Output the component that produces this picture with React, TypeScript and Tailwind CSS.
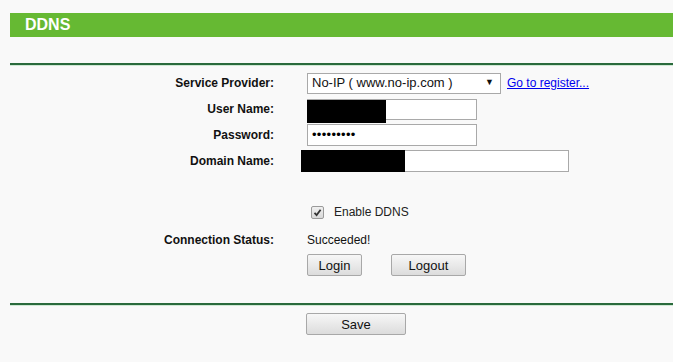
import React from 'react'

const font = { fontFamily: '"Liberation Sans", Arial, sans-serif' }

function Label({ children }: { children: React.ReactNode }) {
  return (
    <div className="w-[274px] shrink-0 text-right text-[12px] font-bold text-[#111]">{children}</div>
  )
}

function Button({ children, width }: { children: React.ReactNode; width: string }) {
  return (
    <button
      className={`h-[22px] ${width} rounded-[2px] border border-[#a8a8a8] bg-gradient-to-b from-[#f7f7f7] to-[#dcdcdc] text-[13px] leading-none text-[#111]`}
    >
      {children}
    </button>
  )
}

export default function App() {
  return (
    <div className="h-[362px] w-[673px] overflow-hidden bg-[#f9f9f9] pt-[13px] pl-[10px]" style={font}>
      <div className="flex h-[24px] items-center bg-[#66b933] pl-[15px] text-[16px] font-bold text-white">
        DDNS
      </div>

      <div className="mt-[26px] h-[2px] bg-[#2a6a3c]" />
      <div className="h-[1px] bg-[#cfe8d4]" />

      <div className="mt-[6px] flex flex-col gap-[4px] -ml-[10px]">
        <div className="flex h-[22px] items-center">
          <Label>Service Provider:</Label>
          <div className="ml-[33px] flex h-[21px] w-[194px] items-center justify-between border border-[#a9a9a9] bg-white pl-[4px] pr-[6px] text-[13px] text-[#111]">
            <span>No-IP ( www.no-ip.com )</span>
            <span className="text-[9px]">▼</span>
          </div>
          <a href="#" className="ml-[6px] text-[12px] text-[#0000ee] underline">
            Go to register...
          </a>
        </div>

        <div className="flex h-[22px] items-center">
          <Label>User Name:</Label>
          <div className="relative ml-[33px] h-[21px] w-[170px] border border-[#a9a9a9] bg-white">
            <div className="absolute left-[-1px] top-0 h-[23px] w-[79px] bg-black" />
          </div>
        </div>

        <div className="flex h-[22px] items-center">
          <Label>Password:</Label>
          <div className="ml-[33px] flex h-[22px] w-[170px] items-center border border-[#a9a9a9] bg-white pl-[4px] text-[13px] tracking-[0.3px] text-black">
            •••••••••
          </div>
        </div>

        <div className="flex h-[22px] items-center">
          <Label>Domain Name:</Label>
          <div className="relative ml-[27px] h-[22px] w-[268px] border border-[#a9a9a9] bg-white">
            <div className="absolute left-[-1px] top-[-1px] h-[22px] w-[104px] bg-black" />
          </div>
        </div>
      </div>

      <div className="-ml-[10px] mt-[29px] flex h-[22px] items-center">
        <div className="ml-[311px] flex h-[13px] w-[13px] items-center justify-center rounded-[2px] border border-[#9a9a9a] bg-gradient-to-b from-[#f0f0f0] to-[#d8d8d8]">
          <svg width="9" height="9" viewBox="0 0 9 9">
            <path d="M1.5 4.8 L3.6 7 L7.6 1.8" fill="none" stroke="#333" strokeWidth="1.8" />
          </svg>
        </div>
        <span className="ml-[10px] text-[12px] text-[#222]">Enable DDNS</span>
      </div>

      <div className="-ml-[10px] mt-[6px] flex h-[22px] items-center">
        <Label>Connection Status:</Label>
        <span className="ml-[33px] text-[12px] text-[#111]">Succeeded!</span>
      </div>

      <div className="-ml-[10px] mt-[3px] flex gap-[29px] pl-[307px]">
        <Button width="w-[55px]">Login</Button>
        <Button width="w-[75px]">Logout</Button>
      </div>

      <div className="mt-[27px] h-[2px] bg-[#2a6a3c]" />
      <div className="h-[1px] bg-[#cfe8d4]" />

      <div className="-ml-[10px] mt-[7px] flex pl-[306px]">
        <Button width="w-[100px]">Save</Button>
      </div>
    </div>
  )
}
